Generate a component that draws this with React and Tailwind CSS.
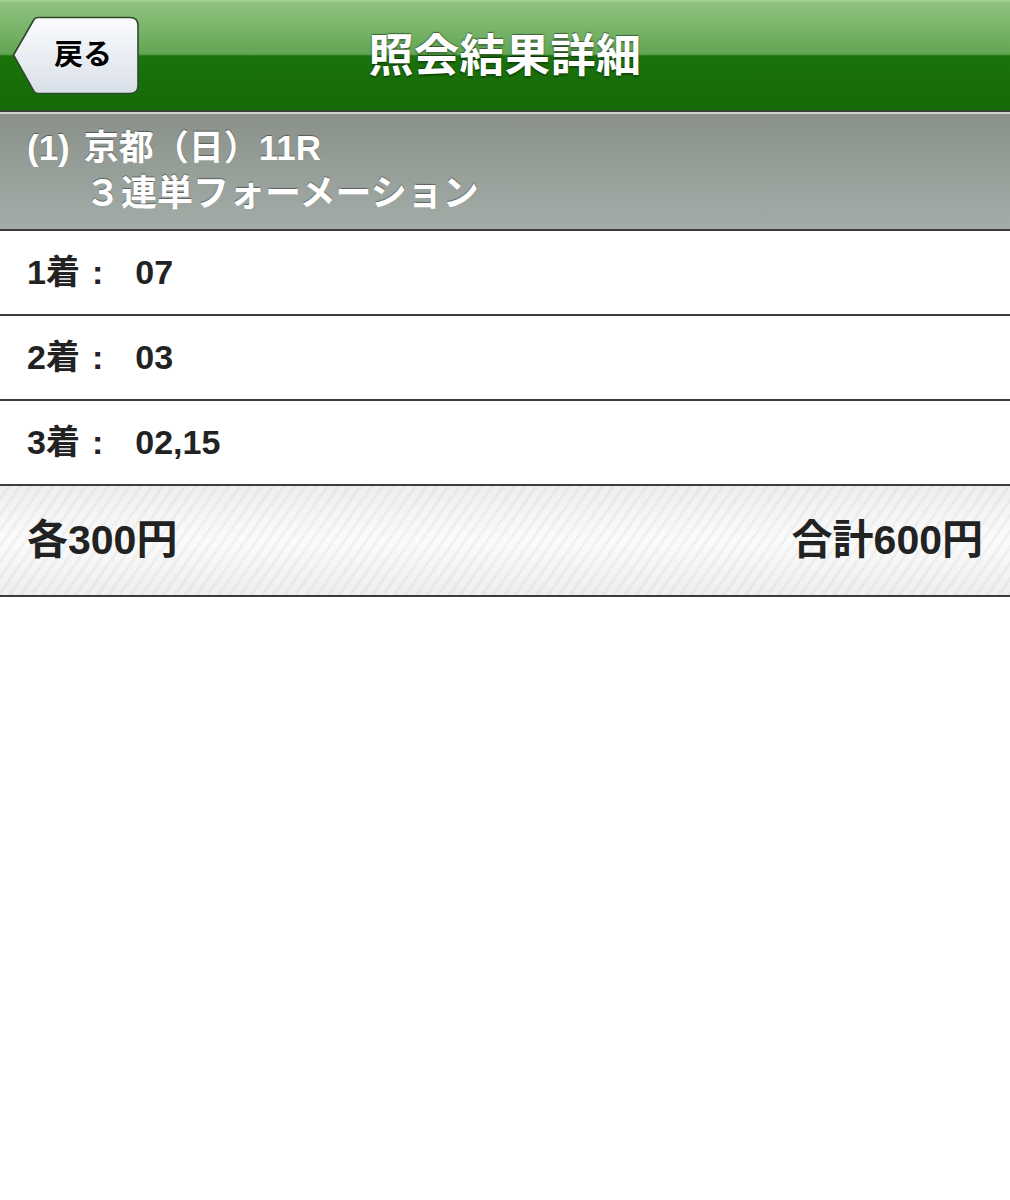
import React from 'react'

const font = { fontFamily: '"Liberation Sans", "Noto Sans CJK JP", sans-serif' }

const BackButton = () => (
  <button className="relative w-[128px] h-[79px] flex items-center justify-center">
    <svg className="absolute inset-0" width="128" height="79" viewBox="0 0 128 79">
      <defs>
        <linearGradient id="bb" x1="0" y1="0" x2="0" y2="1">
          <stop offset="0" stopColor="#fbfcfe" />
          <stop offset="1" stopColor="#d9dfe9" />
        </linearGradient>
      </defs>
      <path
        d="M1.5 39 L22 3.5 Q23.5 1.5 26 1.5 L118 1.5 Q126 1.5 126 9.5 L126 69.5 Q126 77.5 118 77.5 L26 77.5 Q23.5 77.5 22 75.5 Z"
        fill="url(#bb)"
        stroke="#2f4a28"
        strokeWidth="1.6"
      />
    </svg>
    <span className="relative ml-[14px] text-[29px] font-bold text-black leading-none [text-shadow:0_1px_0_rgba(255,255,255,0.8)]">
      戻る
    </span>
  </button>
)

const Row = ({ label, value }) => (
  <div className="h-[85px] border-b-2 border-[#3c3c3c] bg-white flex items-center pl-[27px] text-[34px] font-bold text-[#222]">
    <span>{label}</span>
    <span className="ml-[12px]">:</span>
    <span className="ml-[32px]">{value}</span>
  </div>
)

export default function App() {
  return (
    <div className="w-[1010px] min-h-[1200px] bg-white" style={font}>
      {/* title bar */}
      <header className="h-[112px] border-b-2 border-[#34452f] pt-[16px] pl-[12px] grid grid-cols-[1fr_auto_1fr] items-start bg-[linear-gradient(to_bottom,#a8d698_0px,#8fc27f_3px,#62a653_54px,#1b730c_56px,#156a07_110px)]">
        <div>
          <BackButton />
        </div>
        <h1 className="h-[82px] flex items-center -ml-[12px] text-[45px] font-bold text-white tracking-[0.5px] [text-shadow:0_-1px_1px_rgba(0,0,0,0.45),0_2px_2px_rgba(0,0,0,0.35)]">
          照会結果詳細
        </h1>
        <div />
      </header>

      {/* race info */}
      <section className="border-t-2 border-[#cfd4d0] border-b-2 border-b-[#3a3a3a] bg-[linear-gradient(to_bottom,#8a918b,#a3aca7)] pt-[14px] pb-[13px] pl-[27px] text-white font-bold [text-shadow:0_-1px_1px_rgba(0,0,0,0.4)]">
        <div className="h-[40px] leading-[40px] text-[35px] flex">
          <span>(1)</span>
          <span className="ml-[14px]">京都（日）11R</span>
        </div>
        <div className="h-[44px] leading-[44px] text-[36px] ml-[58px] mt-[4px]">３連単フォーメーション</div>
      </section>

      <Row label="1着" value="07" />
      <Row label="2着" value="03" />
      <Row label="3着" value="02,15" />

      {/* totals */}
      <div className="h-[111px] border-b-2 border-[#3c3c3c] flex items-center justify-between px-[27px] text-[41px] font-bold text-[#222] bg-[repeating-linear-gradient(125deg,rgba(0,0,0,0)_0px,rgba(0,0,0,0)_6px,rgba(0,0,0,0.035)_6px,rgba(0,0,0,0.035)_9px),linear-gradient(to_bottom,#eeeeee,#fbfbfb_50%,#eeeeee)]">
        <span>各300円</span>
        <span>合計600円</span>
      </div>
    </div>
  )
}
